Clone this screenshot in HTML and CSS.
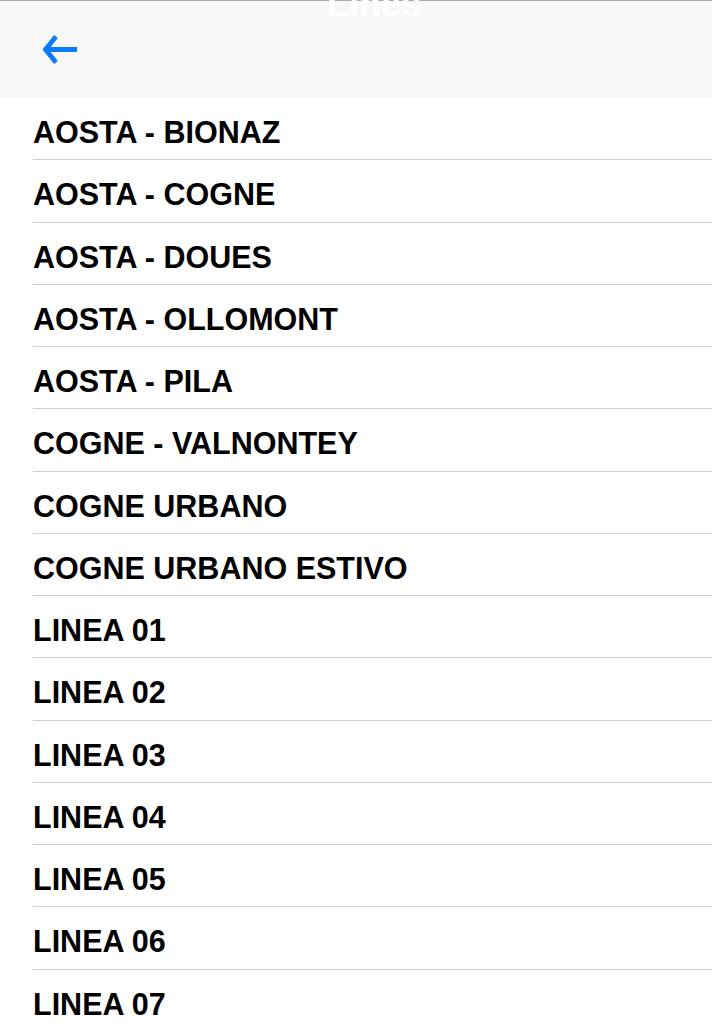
FILE: index.html
```html
<!DOCTYPE html>
<html lang="it">
<head>
<meta charset="utf-8">
<title>Lines</title>
<link rel="stylesheet" href="styles.css">
</head>
<body>
<header class="navbar">
  <span class="nav-title">Lines</span>
  <button class="back" aria-label="Back">
    <svg width="40" height="30" viewBox="0 0 40 30">
      <path d="M16 1.5 L5.5 14.5 L16 27.5" fill="none" stroke="#0a7aff" stroke-width="4.8" stroke-linejoin="miter"/>
      <path d="M6 14.5 H37" fill="none" stroke="#0a7aff" stroke-width="5"/>
    </svg>
  </button>
</header>
<ul class="lines">
  <li class="line">AOSTA - BIONAZ</li>
  <li class="line">AOSTA - COGNE</li>
  <li class="line">AOSTA - DOUES</li>
  <li class="line">AOSTA - OLLOMONT</li>
  <li class="line">AOSTA - PILA</li>
  <li class="line">COGNE - VALNONTEY</li>
  <li class="line">COGNE URBANO</li>
  <li class="line">COGNE URBANO ESTIVO</li>
  <li class="line">LINEA 01</li>
  <li class="line">LINEA 02</li>
  <li class="line">LINEA 03</li>
  <li class="line">LINEA 04</li>
  <li class="line">LINEA 05</li>
  <li class="line">LINEA 06</li>
  <li class="line">LINEA 07</li>
</ul>
</body>
</html>
```
FILE: styles.css
```css
html, body {
  margin: 0;
  padding: 0;
  background: #ffffff;
  overflow: hidden;
  height: 1024px;
}
body {
  font-family: "Liberation Sans", Arial, sans-serif;
}
.navbar {
  position: relative;
  box-sizing: border-box;
  height: 98px;
  border-top: 1px solid #a9a9a9;
  background: #f7f7f7;
  display: flex;
  align-items: flex-start;
  padding: 34px 0 0 40px;
}
.nav-title {
  position: absolute;
  left: 327px;
  top: -15px;
  font-size: 36px;
  line-height: 36px;
  font-weight: bold;
  color: #ffffff;
}
.back {
  border: 0;
  background: none;
  padding: 0;
  margin: 0;
  display: block;
  line-height: 0;
}
.lines {
  list-style: none;
  margin: 0;
  padding: 0;
}
.line {
  box-sizing: border-box;
  height: 62.25px;
  margin-left: 33px;
  padding-top: 17px;
  border-bottom: 1px solid #cfced3;
  font-size: 30.5px;
  line-height: 34px;
  font-weight: bold;
  color: #000000;
}
```
